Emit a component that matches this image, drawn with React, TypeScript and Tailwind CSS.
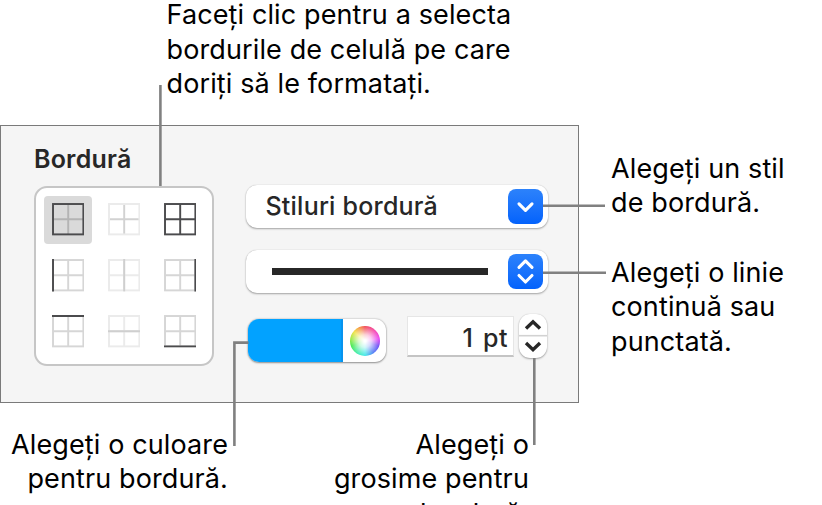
import { clsx } from "clsx";

type Edge = "top" | "bottom" | "left" | "right" | "midX" | "midY";

const DARK = "#4b4b4d";
const MID = "#d6d6d6";
const FAINT = "#ebebeb";

// frame = outer square, cross = inner dividers, edge = the emphasised line
const borderOptions: {
  id: string;
  frame: string;
  cross: string;
  edge?: Edge;
  edgeColor?: string;
  selected?: boolean;
}[] = [
  { id: "outside", frame: DARK, cross: "#b4b4b4", selected: true },
  { id: "inside", frame: FAINT, cross: "#d2d2d2" },
  { id: "all", frame: DARK, cross: DARK },
  { id: "left", frame: MID, cross: MID, edge: "left", edgeColor: DARK },
  { id: "vertical", frame: FAINT, cross: FAINT, edge: "midX", edgeColor: "#cfcfcf" },
  { id: "right", frame: MID, cross: MID, edge: "right", edgeColor: DARK },
  { id: "top", frame: MID, cross: MID, edge: "top", edgeColor: DARK },
  { id: "horizontal", frame: FAINT, cross: FAINT, edge: "midY", edgeColor: "#cfcfcf" },
  { id: "bottom", frame: MID, cross: MID, edge: "bottom", edgeColor: DARK },
];

const edgePaths: Record<Edge, string> = {
  top: "M0 1H32",
  bottom: "M0 31H32",
  left: "M1 0V32",
  right: "M31 0V32",
  midX: "M16 0V32",
  midY: "M0 16H32",
};

function BorderIcon({ frame, cross, edge, edgeColor }: { frame: string; cross: string; edge?: Edge; edgeColor?: string }) {
  return (
    <svg width="32.4" height="32.4" viewBox="0 0 32 32" fill="none" strokeWidth="1.9" className="-mt-[0.8px] -ml-[0.6px]">
      <path d="M16 1V31M1 16H31" stroke={cross} />
      <rect x="1" y="1" width="30" height="30" stroke={frame} />
      {edge && <path d={edgePaths[edge]} stroke={edgeColor} />}
    </svg>
  );
}

function Callout({ lines, className }: { lines: string[]; className?: string }) {
  return (
    <p className={clsx("text-[27px] leading-[34.5px] tracking-[0.12px] whitespace-nowrap text-black", className)}>
      {lines.map((text) => (
        <span key={text} className="block">
          {text}
        </span>
      ))}
    </p>
  );
}

function PopupButton({ children, double }: { children: React.ReactNode; double?: boolean }) {
  return (
    <div className="flex h-[43px] w-[302px] items-center justify-between rounded-[11px] bg-white pr-[5px] shadow-[0_1px_2px_rgba(0,0,0,0.32),0_0_1px_rgba(0,0,0,0.2)]">
      {children}
      <div className="h-[35px] w-[35px] rounded-[8px] bg-linear-to-b from-[#2c82fb] to-[#0362fc]">
        <svg width="35" height="35" viewBox="0 0 35 35" fill="none" stroke="#fff" strokeWidth="3.1" strokeLinecap="round" strokeLinejoin="round">
          {double ? <path d="M11 13.3L17.5 6.8L24 13.3M11 21.5L17.5 28L24 21.5" /> : <path d="M11 14.8L17.5 21.3L24 14.8" />}
        </svg>
      </div>
    </div>
  );
}

function ColorWell() {
  return (
    <div className="flex h-[43px] w-[138px] overflow-hidden rounded-[11px] bg-white shadow-[0_1px_2px_rgba(0,0,0,0.35),0_0_2px_rgba(0,0,0,0.3)]">
      <div className="w-[95px] border-r-2 border-[#0793ee] bg-[#02a2ff]" />
      <div className="flex flex-1 items-center justify-center">
        <div className="h-[30px] w-[30px] rounded-full bg-[radial-gradient(circle,#fff_5%,rgba(255,255,255,0.75)_30%,rgba(255,255,255,0)_72%),conic-gradient(#f0454e,#f53cae_45deg,#e83cf0_80deg,#6a48f5_110deg,#4a7af5_145deg,#3ce8e8_180deg,#3cecb0_210deg,#3ee84a_250deg,#9ae83c_280deg,#f0e03c_310deg,#f58a3c_340deg,#f0454e)]" />
      </div>
    </div>
  );
}

function Stepper() {
  return (
    <div className="h-[44px] w-[28px] rounded-[11px] bg-white shadow-[0_1px_2px_rgba(0,0,0,0.32),0_0_1px_rgba(0,0,0,0.2)]">
      <svg width="28" height="44" viewBox="0 0 28 44" fill="none">
        <path d="M0 21.7H28" stroke="#d2d2d2" strokeWidth="1.6" />
        <path d="M7 14.5L14 7.8L21 14.5M7 29L14 35.7L21 29" stroke="#272727" strokeWidth="3.4" />
      </svg>
    </div>
  );
}

function BorderPanel() {
  return (
    <section className="h-[278px] w-[579px] shrink-0 border border-[#7a7a7a] bg-[#f5f5f5] pt-[17px] pl-[33px]">
      <h2 className="h-[42px] text-[25px] leading-[32px] font-semibold tracking-[0.2px] text-[#272727]">Bordură</h2>
      <div className="flex gap-[32px]">
        <div className="mt-px grid h-[180px] w-[180px] grid-cols-3 gap-2 rounded-[13px] border-2 border-[#c6c6c6] bg-white p-2">
          {borderOptions.map(({ id, selected, ...icon }) => (
            <div key={id} className={clsx("flex h-12 w-12 items-center justify-center rounded-[4px]", selected && "bg-[#dadada]")}>
              <BorderIcon {...icon} />
            </div>
          ))}
        </div>
        <div className="flex flex-col">
          <PopupButton>
            <span className="pl-[19.5px] text-[25px] font-medium tracking-[0.22px] text-[#272727]">Stiluri bordură</span>
          </PopupButton>
          <div className="mt-[22px]">
            <PopupButton double>
              <div className="ml-[26px] h-[7px] w-[216px] bg-[#272727]" />
            </PopupButton>
          </div>
          <div className="mt-[21px] flex items-start pl-[2px]">
            <div className="pt-[5px]">
              <ColorWell />
            </div>
            <div className="mt-[2px] ml-[21px] flex h-[41px] w-[107px] items-center justify-end border border-b-2 border-[#e6e6e6] border-b-[#c4c4c4] bg-white pt-[5px] pr-[5px] text-[25px] font-medium tracking-[0.5px] [word-spacing:2.5px] text-[#272727]">
              1 pt
            </div>
            <div className="ml-[5px]">
              <Stepper />
            </div>
          </div>
        </div>
      </div>
    </section>
  );
}

// Lines that tie each note to its control
function Leaders() {
  return (
    <svg className="absolute inset-0" width="822" height="505" fill="none" stroke="#808080" strokeWidth="2.6">
      <path d="M160.4 85V186" />
      <path d="M543 205.8H605" />
      <path d="M543 272.7H606" />
      <path d="M248.5 342.6H234.4V446" />
      <path d="M534.3 358V445" />
    </svg>
  );
}

export default function App() {
  return (
    <main className="relative flex h-[505px] w-[822px] flex-col overflow-hidden bg-white font-[Inter,sans-serif]">
      <div className="h-[125px] shrink-0 pl-[166.5px]">
        <Callout className="-mt-[2px]" lines={["Faceți clic pentru a selecta", "bordurile de celulă pe care", "doriți să le formatați."]} />
      </div>
      <div className="flex shrink-0">
        <BorderPanel />
        <div className="flex flex-col gap-[35px] pt-[26.6px] pl-[32px]">
          <Callout lines={["Alegeți un stil", "de bordură."]} />
          <Callout lines={["Alegeți o linie", "continuă sau", "punctată."]} />
        </div>
      </div>
      <div className="flex pt-[24.6px] text-right">
        <Callout className="w-[228px]" lines={["Alegeți o culoare", "pentru bordură."]} />
        <Callout className="w-[301px]" lines={["Alegeți o", "grosime pentru", "bordură."]} />
      </div>
      <Leaders />
    </main>
  );
}
